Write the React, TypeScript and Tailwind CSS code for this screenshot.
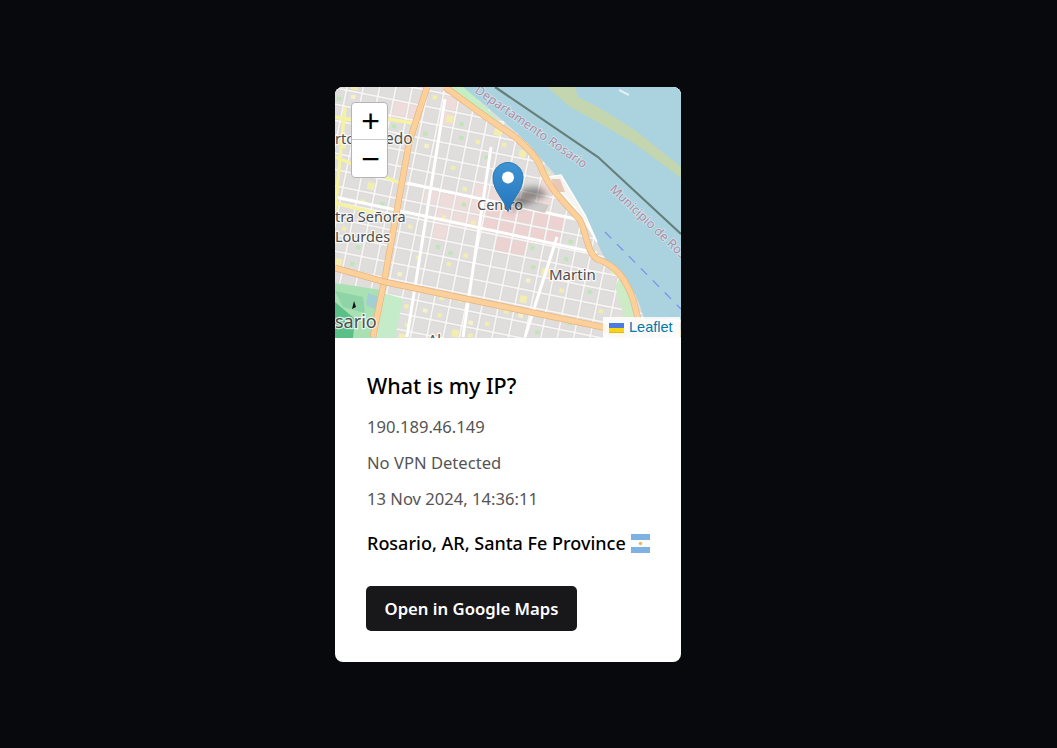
import React from "react";

function rnd(i: number) {
  const x = Math.sin(i * 127.1 + 11.7) * 43758.5453;
  return x - Math.floor(x);
}

function MapBlocks() {
  const items: React.ReactElement[] = [];
  const step = 16;
  let n = 0;
  for (let r = -8; r < 24; r++) {
    for (let c = -6; c < 30; c++) {
      const x = c * step - 3;
      const y = r * step + 2;
      n++;
      const wx = x * Math.cos(0.2) - y * Math.sin(0.2);
      const wy = x * Math.sin(0.2) + y * Math.cos(0.2);
      const strongPink = wx > 150 && wx < 225 && wy > 112 && wy < 155;
      const softPink = wx > 85 && wx < 210 && wy > 92 && wy < 140 && rnd(n + 3) > 0.25;
      const nearNorth = wx > 30 && wx < 110 && wy > 5 && wy < 30 && rnd(n + 7) > 0.6;
      const fill = strongPink ? "#edd2d2" : softPink || nearNorth ? "#eedcda" : "#dfdedd";
      items.push(<rect key={n} x={x} y={y} width={step - 2.4} height={step - 2.4} fill={fill} stroke="#d2d0ce" strokeWidth={0.5} />);
      const q = rnd(n);
      if (q < 0.3 && !strongPink) {
        const col = q < 0.14 ? "#f1eeb0" : q < 0.22 ? "#bfe5b8" : "#f6f2c8";
        items.push(<rect key={`s${n}`} x={x + 2 + rnd(n + 5) * 6} y={y + 2 + rnd(n + 9) * 6} width={q < 0.05 ? 7 : 4.5} height={q < 0.05 ? 7 : 4} fill={col} />);
      }
    }
  }
  return <g transform="rotate(11.5)">{items}</g>;
}

const labelClass = "font-['Noto_Sans',sans-serif]";

function MapArt() {
  const halo = { paintOrder: "stroke" as const, stroke: "rgba(255,255,255,0.75)", strokeWidth: 2.5 };
  const artery1 = "M92 0 L74 56 L50 190 L38 250";
  const artery2 = "M0 181 L50 195 L267 240 L290 250";
  const artery3 = "M110 0 C135 18 150 30 170 43 C185 52 200 68 205 78 C212 100 232 118 245 133 C252 148 252 165 262 172 C280 178 290 190 298 212 L305 240";
  return (
    <svg width="346" height="251" viewBox="0 0 346 251" className="block">
      <defs>
        <linearGradient id="pin" x1="0" y1="0" x2="0" y2="1">
          <stop offset="0" stopColor="#3f93d2" />
          <stop offset="1" stopColor="#2476bd" />
        </linearGradient>
        <filter id="blur1" x="-30%" y="-30%" width="160%" height="160%">
          <feGaussianBlur stdDeviation="3" />
        </filter>
        <filter id="soft" x="-5%" y="-5%" width="110%" height="110%">
          <feGaussianBlur stdDeviation="0.4" />
        </filter>
      </defs>
      <rect width="346" height="251" fill="#f8f6f4" />
      <g filter="url(#soft)">
        <MapBlocks />
        <path d="M0 110 L262 166 M110 12 L72 250 M156 60 L128 250 M222 150 L190 250 M72 96 L250 134" stroke="#ffffff" strokeWidth="3" fill="none" />
        <path d="M53 32 L84 37 M0 70 L70 98 M10 20 L0 123 M0 116 L40 126 M0 30 L36 36" stroke="#f5f2a2" strokeWidth="3.4" fill="none" />
        <path d="M178 110 L214 118 L210 126 L176 118 Z" fill="#cdcbc9" />
        <path d="M0 196 L46 203 L38 251 L0 251 Z" fill="#a9e0b4" />
        <path d="M33 206 L44 210 L40 222 L31 218 Z" fill="#a3cfd4" />
        <path d="M0 204 L28 210 L30 226 L8 220 Z" fill="#8ed4a6" />
        <path d="M49 206 L68 212 L60 251 L42 251 Z" fill="#c5ecc8" />
        <path d="M0 215 L20 232 L18 251 L0 251 Z" fill="#5bbf88" />
        <path d="M19 214 L17 222 L21 220 Z" fill="#111" />
        <path d="M285 190 L300 215 L304 232 L290 232 L280 200 Z" fill="#cdebc6" />
        <path d="M112 0 L130 0 L173 43 L207 77 L247 133 L263 173 L287 187 L307 232 L300 232 L283 181 L258 170 L245 133 L205 75 L170 43 Z" fill="#c4eec4" />
        <path d="M128 0 L346 0 L346 232 L309 232 C302 205 292 190 274 178 C262 160 258 140 245 120 C232 100 215 82 200 65 C190 52 170 35 128 0 Z" fill="#aad3df" />
        <path d="M212 0 L240 0 L243 10 L263 20 L300 43 L346 80 L346 91 L300 57 L266 37 L235 20 Z" fill="#c3d6b0" />
        <path d="M284 3 L294 8" stroke="#dff0f4" strokeWidth="2" />
        <path d="M160 0 L263 70 L346 147" stroke="#667f78" strokeWidth="2.2" fill="none" />
        <path d="M270 145 L346 222" stroke="#7a8df0" strokeWidth="1.2" strokeDasharray="9 8" fill="none" />
        <path d="M213 90 L226 88 L250 128 L262 155 L246 128 Z" fill="#f6f4f1" stroke="#ffffff" strokeWidth="1.5" />
        <path d="M216 92 L225 92 L230 105 L222 105 Z" fill="#e8c8b8" />
        <path d={artery1} stroke="#e8b47c" strokeWidth="6.5" fill="none" />
        <path d={artery1} stroke="#fcd09b" strokeWidth="5.2" fill="none" />
        <path d={artery2} stroke="#e8b47c" strokeWidth="6.5" fill="none" />
        <path d={artery2} stroke="#fcd09b" strokeWidth="5.2" fill="none" />
        <path d={artery3} stroke="#e8b47c" strokeWidth="6.5" fill="none" />
        <path d={artery3} stroke="#fcd09b" strokeWidth="5.2" fill="none" />
      </g>
      <g fill="#4f4f4f" fontSize="14.5" className={labelClass} style={halo}>
        <text x="0" y="57">rto</text>
        <text x="50" y="57" fontSize="15.5">edo</text>
        <text x="0" y="135">tra Señora</text>
        <text x="142" y="123">Centro</text>
        <text x="214" y="193" fontSize="15">Martin</text>
        <text x="0" y="155">Lourdes</text>
        <text x="0" y="241" fontSize="18">sario</text>
        <text x="93" y="258">Al</text>
      </g>
      <g fill="#ad8da6" fontSize="12.5" className={labelClass} style={{ paintOrder: "stroke", stroke: "rgba(255,255,255,0.45)", strokeWidth: 1.5 }}>
        <text transform="translate(139 5) rotate(35)">Departamento Rosario</text>
        <text transform="translate(274 103) rotate(43.5)">Municipio de Ros</text>
      </g>
      <path d="M173 125 L188 101 L204 100 L213 108 Z" fill="#000" opacity="0.38" filter="url(#blur1)" />
      <path
        d="M173 124.5 C169 112 158 104 158 90.5 C158 82 165 75.5 173 75.5 C181 75.5 188 82 188 90.5 C188 104 177 112 173 124.5 Z"
        fill="url(#pin)"
        stroke="#2a78b5"
        strokeWidth="1"
      />
      <circle cx="173" cy="90.5" r="6" fill="#fff" />
    </svg>
  );
}

function ArgFlag() {
  return (
    <svg width="19" height="19" viewBox="0 0 19 19" className="inline-block shrink-0">
      <rect width="19" height="19" fill="#7eb2e3" />
      <rect y="6" width="19" height="7" fill="#fbfdff" />
      <circle cx="9.5" cy="9.5" r="1.8" fill="#f0b95c" />
    </svg>
  );
}

export default function App() {
  return (
    <div className="min-h-screen w-full bg-[#08090c] flex items-start justify-center pr-[41px] pt-[87px] font-['Noto_Sans',sans-serif]">
      <div className="w-[346px] h-[575px] bg-white rounded-[8px] overflow-hidden flex flex-col">
        <div className="relative h-[251px] w-full overflow-hidden">
          <MapArt />
          <div className="absolute left-[16px] top-[15px] w-[37px] h-[76px] bg-white rounded-[4px] border border-[#b5b5b5] flex flex-col overflow-hidden">
            <div className="h-[37px] flex items-center justify-center pl-[2px] border-b border-[#cccccc] text-black text-[32px] leading-none font-['Liberation_Sans',sans-serif]">+</div>
            <div className="flex-1 flex items-center justify-center pl-[2px] text-black text-[32px] leading-none font-['Liberation_Sans',sans-serif]">−</div>
          </div>
          <div className="absolute right-[1px] bottom-0 h-[21px] w-[77px] bg-[#ffffff]/85 flex items-center gap-[5px] pl-[6px] font-['Liberation_Sans',sans-serif] text-[14.5px] text-[#0078a8]">
            <svg width="15" height="10" viewBox="0 0 15 10" className="shrink-0">
              <rect width="15" height="5" fill="#4c7be1" />
              <rect y="5" width="15" height="3.5" fill="#ffd500" />
              <rect y="8.5" width="15" height="1.5" fill="#e0bc00" />
            </svg>
            <span>Leaflet</span>
          </div>
        </div>
        <div className="flex flex-col pl-[32px] pr-[24px] pt-[33px] items-start">
          <h2 className="text-[21.5px] leading-[30px] font-medium text-black">What is my IP?</h2>
          <p className="mt-[14px] text-[16.6px] leading-[24px] text-[#555555]">190.189.46.149</p>
          <p className="mt-[12px] text-[16.6px] leading-[24px] text-[#555555]">No VPN Detected</p>
          <p className="mt-[12px] text-[16.6px] leading-[24px] text-[#555555]">13 Nov 2024, 14:36:11</p>
          <div className="mt-[17px] flex items-center gap-[5px] text-[18px] leading-[30px] font-medium text-black whitespace-nowrap">
            <span>Rosario, AR, Santa Fe Province</span>
            <ArgFlag />
          </div>
          <button className="mt-[28px] -ml-[1px] w-[211px] h-[45px] rounded-[5px] bg-[#18181b] text-white text-[16.7px] font-semibold">Open in Google Maps</button>
        </div>
      </div>
    </div>
  );
}
